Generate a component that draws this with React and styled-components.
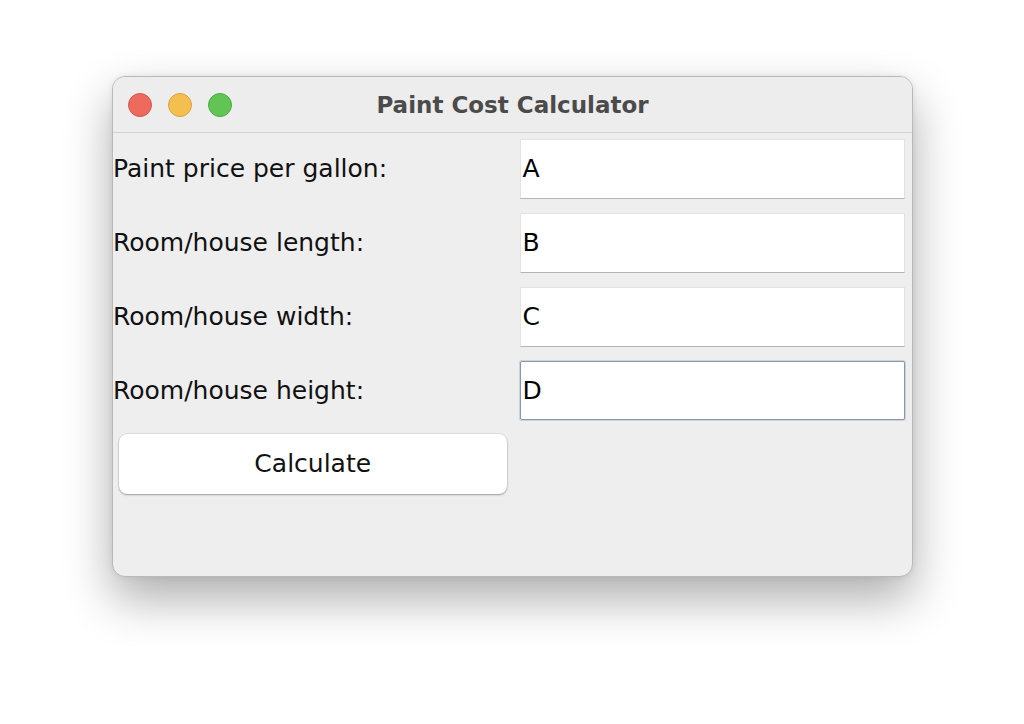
import React from "react";
import styled, { createGlobalStyle } from "styled-components";

const Global = createGlobalStyle`
  html, body { margin: 0; padding: 0; background: #ffffff; }
  body { width: 1024px; height: 724px; overflow: hidden; }
`;

const Stage = styled.div`
  padding: 76px 0 0 112px;
`;

const Window = styled.div`
  width: 801px;
  height: 501px;
  box-sizing: border-box;
  border: 1px solid #b9b9b9;
  border-radius: 13px;
  background: #eeeeee;
  box-shadow: 0 22px 48px rgba(0, 0, 0, 0.32), 0 0 6px rgba(0, 0, 0, 0.08);
  display: flex;
  flex-direction: column;
  overflow: hidden;
`;

const TitleBar = styled.div`
  height: 55px;
  flex: none;
  display: flex;
  align-items: center;
  position: relative;
  border-bottom: 1px solid #d2d2d2;
  background: #ededed;
  padding-left: 15px;
  gap: 16px;
`;

const Light = styled.span`
  width: 24px;
  height: 24px;
  border-radius: 50%;
  background: ${(p) => p.$c};
  border: 1px solid ${(p) => p.$b};
  box-sizing: border-box;
`;

const Title = styled.div`
  position: absolute;
  left: 0;
  right: 0;
  top: 0;
  bottom: 0;
  display: flex;
  align-items: center;
  justify-content: center;
  font-family: "DejaVu Sans", sans-serif;
  font-weight: bold;
  font-size: 23px;
  color: #4b4b4b;
  pointer-events: none;
`;

const Grid = styled.div`
  flex: 1;
  display: grid;
  grid-template-columns: 1fr 1fr;
  grid-template-rows: repeat(6, 1fr);
`;

const Label = styled.div`
  display: flex;
  align-items: center;
  padding: 0 0 2px 0;
  font-family: "DejaVu Sans", sans-serif;
  font-size: 25px;
  color: #111;
`;

const FieldCell = styled.div`
  padding: 6px 7px 8px 7px;
  display: flex;
`;

const Field = styled.div`
  flex: 1;
  background: #fff;
  box-sizing: border-box;
  border: 1px solid ${(p) => (p.$focus ? "#8797ad" : "#e2e2e2")};
  border-bottom-color: ${(p) => (p.$focus ? "#8797ad" : "#b4b4b4")};
  box-shadow: ${(p) => (p.$focus ? "0 0 0 1px #c9d2dd" : "none")};
  border-radius: ${(p) => (p.$focus ? "2px" : "0")};
  display: flex;
  align-items: center;
  padding-left: 2px;
  font-family: "DejaVu Sans", sans-serif;
  font-size: 25px;
  color: #000;
`;

const ButtonCell = styled.div`
  padding: 6px 6px 8px 6px;
  display: flex;
`;

const Button = styled.button`
  flex: 1;
  background: #fff;
  border: none;
  border-radius: 8px;
  box-shadow: 0 0 0 0.5px rgba(0, 0, 0, 0.12), 0 1px 2px rgba(0, 0, 0, 0.3);
  font-family: "DejaVu Sans", sans-serif;
  font-size: 25px;
  color: #111;
  padding: 0 0 2px 0;
`;

const Empty = styled.div``;

const rows = [
  ["Paint price per gallon:", "A"],
  ["Room/house length:", "B"],
  ["Room/house width:", "C"],
  ["Room/house height:", "D", true],
];

export default function App() {
  return (
    <>
      <Global />
      <Stage>
        <Window>
          <TitleBar>
            <Light $c="#ee6a5f" $b="#d5574c" />
            <Light $c="#f5bf4f" $b="#d9a33b" />
            <Light $c="#61c454" $b="#4ea943" />
            <Title>Paint Cost Calculator</Title>
          </TitleBar>
          <Grid>
            {rows.map(([label, value, focus]) => (
              <React.Fragment key={label}>
                <Label>{label}</Label>
                <FieldCell>
                  <Field $focus={focus}>{value}</Field>
                </FieldCell>
              </React.Fragment>
            ))}
            <ButtonCell>
              <Button>Calculate</Button>
            </ButtonCell>
            <Empty />
            <Empty />
            <Empty />
          </Grid>
        </Window>
      </Stage>
    </>
  );
}
